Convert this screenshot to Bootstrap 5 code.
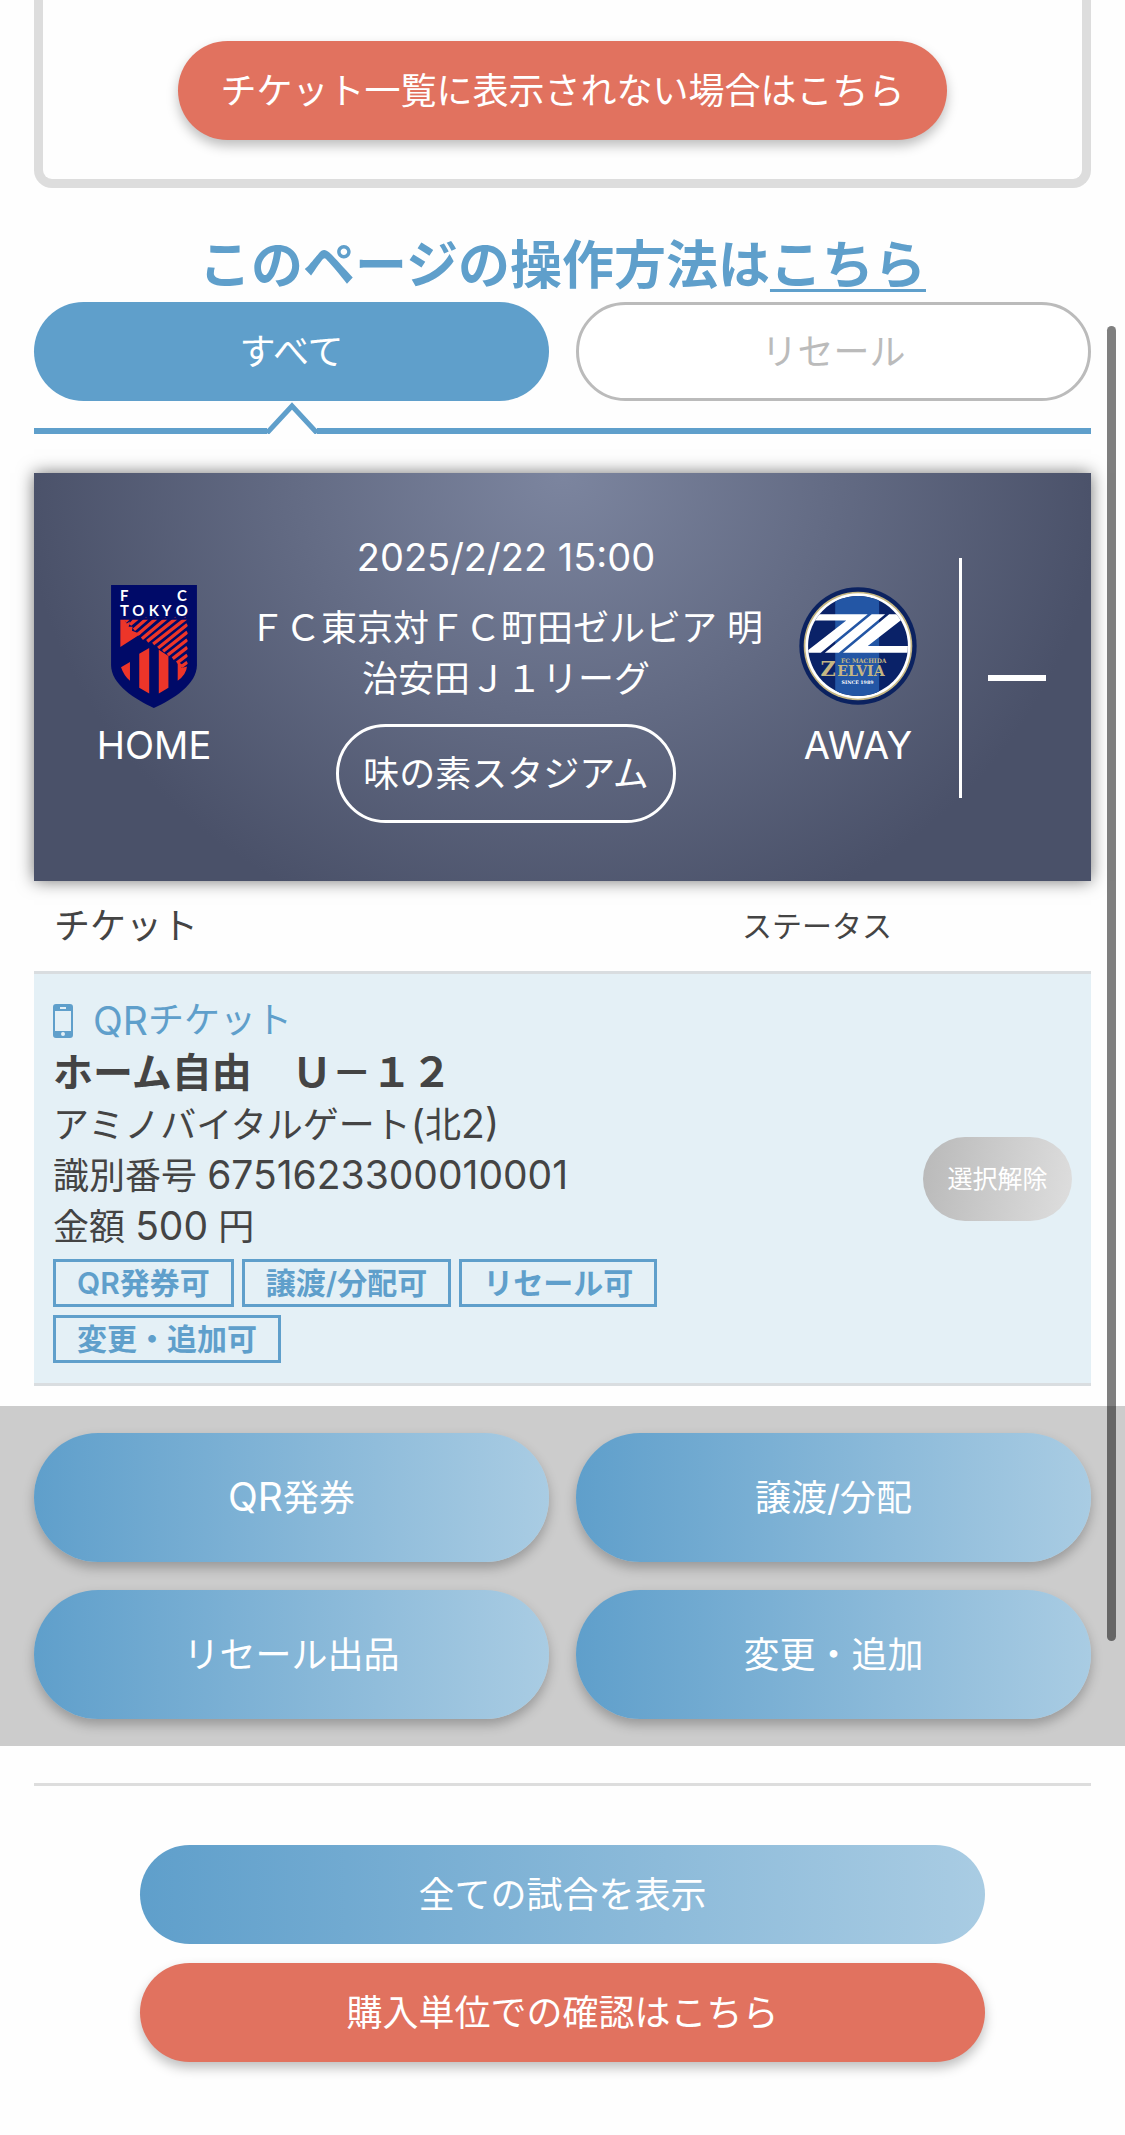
<!DOCTYPE html>
<html lang="ja">
<head>
<meta charset="utf-8">
<meta name="viewport" content="width=device-width, initial-scale=1">
<title>チケット一覧</title>
<link href="https://cdn.jsdelivr.net/npm/bootstrap@5.3.0/dist/css/bootstrap.min.css" rel="stylesheet">
<style>
:root{--sky:#5f9fcb;--sky-light:#a9cce3;--coral:#e1725f;--line:#ddd;--ink:#444}
body{font-family:Inter,"Noto Sans CJK JP",sans-serif;font-size:36px;line-height:51px;color:var(--ink);background:#fefefe}
.gutter{padding-left:34px;padding-right:34px}
.latin{font-size:38px}
span.latin{font-size:39px;line-height:1}
.notice-box{border:9px solid var(--line);border-top:0;border-radius:0 0 18px 18px;padding:41px 20px 39px}
.pill{display:block;width:100%;border:0;border-radius:64px;padding:25px 20px 23px;color:#fff;text-align:center;text-decoration:none;font-size:36px;line-height:51px}
.pill-coral{background:var(--coral);box-shadow:0 6px 12px rgba(0,0,0,.25)}
.pill-sky{background:linear-gradient(90deg,var(--sky),var(--sky-light))}
.pill-action{padding:40px 20px 38px;box-shadow:0 6px 12px rgba(0,0,0,.25)}
.pill-notice{max-width:769px}
.howto{font-size:52px;line-height:73px;font-weight:700;color:var(--sky);margin-top:41px}
.howto a{color:inherit;text-decoration-thickness:3px;text-underline-offset:5px}
.pair-grid{display:grid;grid-template-columns:1fr 1fr;gap:28px 27px}
.tab-on{background:var(--sky)}
.tab-off{background:#fff;color:#bbb;border:3px solid #bbb;padding:22px 20px 20px}
.tab-rule{display:flex;align-items:flex-end}
.tab-rule i{height:6px;background:var(--sky)}
.tab-rule i:first-child{width:22%}
.tab-rule svg{display:block;width:50px;height:33px}
.match-head{margin-top:39px;padding:59px 0 58px 32px;color:#fff;background:radial-gradient(ellipse 540px 480px at 50% 0,#7c859f,#4a5169);box-shadow:0 0 16px rgba(0,0,0,.55)}
.team{width:176px}
.crest{height:123px;margin-bottom:12px}
.match-name{margin:20px 0 19px}
.venue{border:3px solid #fff;border-radius:50px;padding:22px 24px 20px}
.fold{border:0;border-left:3px solid #fff;background:none;width:132px;height:240px;margin-left:13px;padding:0 0 0 26px}
.fold span{display:block;width:58px;height:6px;background:#fff}
.ticket-table{width:100%;table-layout:fixed}
.ticket-table th{font-weight:400}
.ticket-table .col-status{width:174px}
.ticket-table .col-act{width:187px}
.ticket-table thead th{padding:20px 0 19px 20px}
.ticket-table thead .th-status{font-size:30px;padding-left:0;text-align:center}
.ticket-row td{background:#e4f0f6;border-top:3px solid #d9dde0;border-bottom:3px solid #d9dde0;padding:21px 19px 20px;vertical-align:middle}
.kind{color:var(--sky)}
.kind svg{width:20px;height:34px;margin-right:20px}
.seat{font-size:40px;line-height:54px;font-weight:700}
.flags{gap:8px;padding-top:6px;font-size:30px;line-height:42px;font-weight:600;color:var(--sky)}
.flags li{border:3px solid var(--sky);padding:0 21px}
.release{border:0;border-radius:42px;width:149px;height:84px;color:#fff;font-size:25px;background:linear-gradient(100deg,#b9b9b9,#dedede);white-space:nowrap;padding:0}
.action-bar{background:#ccc;margin-top:20px;padding-top:27px;padding-bottom:27px}
.divider{border:0;border-top:3px solid var(--line);opacity:1;margin:37px 0 59px}
.wide-links{width:80%;gap:19px;margin:0 auto 73px}
.scroll-thumb{position:absolute;top:326px;right:9px;width:9px;height:1315px;border-radius:5px;background:rgba(0,0,0,.5)}
</style>
<script src="https://cdn.jsdelivr.net/npm/bootstrap@5.3.0/dist/js/bootstrap.bundle.min.js"></script>
</head>
<body class="position-relative">
<main>
  <div class="gutter">
    <section class="notice-box">
      <a href="#" class="pill pill-coral pill-notice mx-auto">チケット一覧に表示されない場合はこちら</a>
    </section>

    <h1 class="howto text-center mb-0">このページの操作方法は<a href="#">こちら</a></h1>

    <div class="pair-grid">
      <button type="button" class="pill tab-on">すべて</button>
      <button type="button" class="pill tab-off">リセール</button>
    </div>
    <div class="tab-rule">
      <i></i>
      <svg viewBox="0 0 50 33" aria-hidden="true"><path d="M0 32L25 5L50 32" fill="none" stroke="#5f9fcb" stroke-width="5"/></svg>
      <i class="flex-grow-1"></i>
    </div>

    <section class="match-head d-flex align-items-center">
      <div class="team text-center">
        <div class="crest d-flex align-items-center justify-content-center">
          <svg width="86" height="123" viewBox="63 42 259 371" role="img" aria-label="FC東京">
            <path d="M63 42H322V283C322 342 250 386 192 413C135 386 63 342 63 283Z" fill="#000a68"/>
            <g fill="#fff" font-family="Lato,sans-serif" font-weight="700" font-size="45">
              <text x="90 262" y="91">FC</text>
              <text x="90 127 177 216 258" y="135">TOKYO</text>
            </g>
            <path d="M91 147H104L110 158L120 152L116 168L128 168L126 180L152 190L91 229Z" fill="#ed3529"/>
            <path d="M103 147H119L109 156ZM128 147H146L124 165L116 160Z" fill="#ed3529"/>
            <g stroke="#ed3529" stroke-width="10">
              <path d="M172 142L132 177M200 142L143 191M230 142L156 204M260 142L172 212M290 142L190 220"/>
              <path d="M293 161L205 232M293 184L220 242M293 207L234 253M293 230L249 264M293 253L262 277M293 275L275 288"/>
            </g>
            <path d="M148 140H300V147H148ZM294 142H302V290H294Z" fill="#000a68"/>
            <path d="M93 290L120 274V331Q102 316 93 290ZM148 249L178 232V369L148 352ZM207 237L236 256V352L207 369ZM264 273L280 284L275 292L292 288Q290 312 264 331Z" fill="#ed3529"/>
          </svg>
        </div>
        <div class="latin">HOME</div>
      </div>
      <div class="flex-grow-1 text-center d-flex flex-column align-items-center">
        <div class="latin">2025/2/22 15:00</div>
        <div class="match-name">ＦＣ東京対ＦＣ町田ゼルビア 明<br>治安田Ｊ１リーグ</div>
        <div class="venue">味の素スタジアム</div>
      </div>
      <div class="team text-center">
        <div class="crest d-flex align-items-center justify-content-center">
          <svg width="118" height="118" viewBox="33 37 352 352" role="img" aria-label="FC町田ゼルビア">
            <defs><clipPath id="disc"><circle cx="209" cy="213" r="149"/></clipPath></defs>
            <circle cx="209" cy="213" r="175" fill="#0b2260"/>
            <circle cx="209" cy="213" r="162" fill="#c5b683"/>
            <circle cx="209" cy="213" r="157" fill="#fff"/>
            <g clip-path="url(#disc)">
              <path d="M50 50H370V370H50Z" fill="#0a2268"/>
              <path d="M141 50H272V370H141Z" fill="#2356a5"/>
              <path d="M50 118H238L98 233H50L174 137H50ZM250 118H290L152 233H110ZM302 118H360L238 213H370V233H164Z" fill="#fff"/>
              <g fill="#c5b683" font-family="'DejaVu Serif',serif" font-weight="700">
                <text x="97" y="303" font-size="62">Z</text>
                <text x="147" y="303" font-size="42">ELVIA</text>
                <text x="158" y="265" font-size="18">FC MACHIDA</text>
              </g>
              <text x="160" y="326" font-family="'DejaVu Serif',serif" font-weight="700" font-size="14" fill="#fff">SINCE 1989</text>
            </g>
          </svg>
        </div>
        <div class="latin">AWAY</div>
      </div>
      <button type="button" class="fold" aria-label="閉じる"><span></span></button>
    </section>

    <table class="ticket-table">
      <colgroup><col><col class="col-status"><col class="col-act"></colgroup>
      <thead>
        <tr><th scope="col">チケット</th><th scope="col" class="th-status">ステータス</th><td></td></tr>
      </thead>
      <tbody>
        <tr class="ticket-row">
          <td>
            <div class="kind d-flex align-items-center">
              <svg viewBox="0 0 20 34" aria-hidden="true"><path fill="#5f9fcb" fill-rule="evenodd" d="M3 0H17Q20 0 20 3V31Q20 34 17 34H3Q0 34 0 31V3Q0 0 3 0ZM2 7V27H18V7ZM7 3V5H13V3ZM10 28A2 2 0 1 0 10 32A2 2 0 1 0 10 28Z"/></svg><span class="latin">QR</span>チケット
            </div>
            <div class="seat">ホーム自由　Ｕ－１２</div>
            <div>アミノバイタルゲート<span class="latin">(</span>北<span class="latin">2)</span></div>
            <div>識別番号 <span class="latin">6751623300010001</span></div>
            <div>金額 <span class="latin">500</span> 円</div>
            <ul class="flags list-unstyled d-flex flex-wrap mb-0">
              <li>QR発券可</li>
              <li>譲渡/分配可</li>
              <li>リセール可</li>
              <li>変更・追加可</li>
            </ul>
          </td>
          <td></td>
          <td><button type="button" class="release">選択解除</button></td>
        </tr>
      </tbody>
    </table>
  </div>

  <section class="action-bar gutter">
    <div class="pair-grid">
      <button type="button" class="pill pill-sky pill-action"><span class="latin">QR</span>発券</button>
      <button type="button" class="pill pill-sky pill-action">譲渡/分配</button>
      <button type="button" class="pill pill-sky pill-action">リセール出品</button>
      <button type="button" class="pill pill-sky pill-action">変更・追加</button>
    </div>
  </section>

  <div class="gutter">
    <hr class="divider">
    <div class="wide-links d-flex flex-column">
      <a href="#" class="pill pill-sky">全ての試合を表示</a>
      <a href="#" class="pill pill-coral">購入単位での確認はこちら</a>
    </div>
  </div>
</main>
<div class="scroll-thumb" aria-hidden="true"></div>
</body>
</html>
